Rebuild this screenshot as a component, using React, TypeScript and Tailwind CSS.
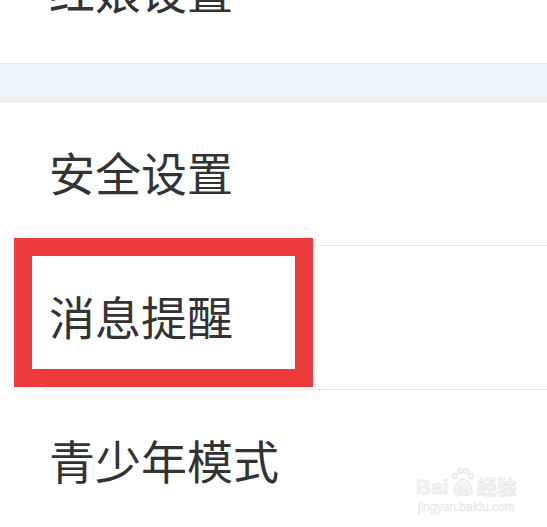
import React from "react";

const font = { fontFamily: '"Noto Sans CJK SC", "Noto Sans", sans-serif' };

function Row({ label, children }: { label: string; children?: React.ReactNode }) {
  return (
    <div className="relative flex h-[143px] items-center pl-[49px]">
      {children}
      <span className="relative -top-[3px] text-[46px] leading-none text-[#333333]">{label}</span>
    </div>
  );
}

export default function App() {
  return (
    <div className="relative h-[527px] w-[547px] overflow-hidden bg-white" style={font}>
      <div className="-mt-[80px]">
        <Row label="红娘设置" />
      </div>
      <div className="h-px bg-[#e3e5e7]" />
      <div className="h-[37px] bg-[#f0f3f5]" />
      <div className="h-px bg-[#e3e5e7]" />
      <Row label="安全设置" />
      <div className="ml-[45px] h-px bg-[#e6e6e6]" />
      <Row label="消息提醒">
        <div className="absolute left-[14px] top-[-8px] h-[149px] w-[299px] border-[18px] border-[#ee3a3b]" />
      </Row>
      <div className="ml-[45px] h-px bg-[#e6e6e6]" />
      <Row label="青少年模式" />

      <div className="absolute left-[416px] top-[467px] flex flex-col items-center text-[#f3f3f3]">
        <div className="flex items-end">
          <span className="text-[21px] font-bold leading-none" style={{ fontFamily: '"Liberation Sans", sans-serif', WebkitTextStroke: "0.5px #e2e2e2" }}>
            Bai
          </span>
          <svg width="26" height="30" viewBox="0 0 26 30" className="mx-[1px]">
            <g fill="#f6f6f6" stroke="#e2e2e2" strokeWidth="1">
              <ellipse cx="5" cy="9" rx="2.5" ry="3" />
              <ellipse cx="10" cy="4" rx="2.5" ry="3" />
              <ellipse cx="16" cy="4" rx="2.5" ry="3" />
              <ellipse cx="21" cy="9" rx="2.5" ry="3" />
              <path d="M13 12 C8 12 4 20 4 24 C4 28 9 29 13 28 C17 29 22 28 22 24 C22 20 18 12 13 12 Z" />
            </g>
            <text x="13" y="26" textAnchor="middle" fontSize="10" fontWeight="bold" fill="#ffffff" stroke="#e2e2e2" strokeWidth="0.5" style={{ fontFamily: '"Liberation Sans", sans-serif' }}>
              du
            </text>
          </svg>
          <span className="text-[20px] font-bold leading-none" style={{ WebkitTextStroke: "0.5px #e2e2e2" }}>经验</span>
        </div>
        <span className="mt-[4px] text-[12px] leading-none" style={{ fontFamily: '"Liberation Sans", sans-serif', WebkitTextStroke: "0.4px #e2e2e2" }}>
          jingyan.baidu.com
        </span>
      </div>
    </div>
  );
}
